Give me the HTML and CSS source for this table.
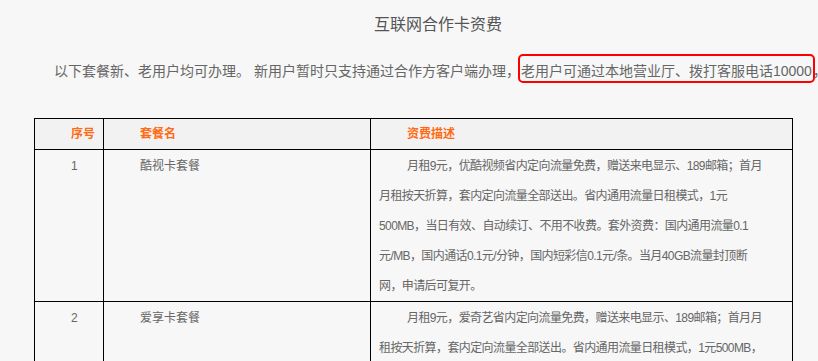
FILE: index.html
```html
<!DOCTYPE html>
<html lang="zh-CN">
<head>
<meta charset="utf-8">
<title>互联网合作卡资费</title>
<link rel="stylesheet" href="styles.css">
</head>
<body>
<div class="page">
  <h1 class="title">互联网合作卡资费</h1>
  <p class="intro">以下套餐新、老用户均可办理。 新用户暂时只支持通过合作方客户端办理，<span class="mark">老用户可通过本地营业厅、拨打客服电话10000</span>，</p>
  <table class="fees">
    <thead>
      <tr>
        <th class="c-no">序号</th>
        <th class="c-name">套餐名</th>
        <th class="c-desc">资费描述</th>
      </tr>
    </thead>
    <tbody>
      <tr>
        <td>1</td>
        <td>酷视卡套餐</td>
        <td class="desc">月租9元，优酷视频省内定向流量免费，赠送来电显示、189邮箱；首月<br>月租按天折算，套内定向流量全部送出。省内通用流量日租模式，1元<br>500MB，当日有效、自动续订、不用不收费。套外资费：国内通用流量0.1<br>元/MB，国内通话0.1元/分钟，国内短彩信0.1元/条。当月40GB流量封顶断<br>网，申请后可复开。</td>
      </tr>
      <tr>
        <td>2</td>
        <td>爱享卡套餐</td>
        <td class="desc">月租9元，爱奇艺省内定向流量免费，赠送来电显示、189邮箱；首月月<br>租按天折算，套内定向流量全部送出。省内通用流量日租模式，1元500MB，</td>
      </tr>
    </tbody>
  </table>
</div>
</body>
</html>
```

FILE: styles.css
```css
html, body {
  margin: 0;
  padding: 0;
  background: #f7f7f7;
  overflow: hidden;
}

body {
  font-family: "Liberation Sans", "Noto Sans CJK SC", sans-serif;
  color: #666;
}

.page {
  width: 876px;
  padding-top: 14px;
}

.title {
  margin: 0;
  font-size: 16px;
  line-height: 22px;
  font-weight: normal;
  color: #555;
  text-align: center;
}

.intro {
  margin: 18px 0 0 0;
  padding-left: 54px;
  font-size: 14px;
  line-height: 30px;
  white-space: nowrap;
  color: #666;
}

.mark {
  display: inline-block;
  line-height: 19px;
  border: 2px solid #f00;
  border-radius: 5px;
  padding: 6px 1px 0 1px;
  margin-left: -2px;
  margin-right: -2px;
}

.fees {
  margin: 32px 0 0 34px;
  border-collapse: collapse;
  width: 759px;
  table-layout: fixed;
  font-size: 12px;
}

.fees th,
.fees td {
  border: 1px solid #000;
  padding: 0 8px;
  line-height: 30px;
  text-align: left;
  text-indent: 28px;
  vertical-align: top;
  white-space: nowrap;
}

.fees td {
  padding-top: 1px;
  padding-bottom: 0;
}

.fees th {
  background: #f2f2f2;
  color: #ff6a13;
  font-weight: bold;
}

.fees .desc {
  letter-spacing: -0.6px;
}

.c-no { width: 52px; }
.c-name { width: 250px; }
.c-desc { width: auto; }
```
